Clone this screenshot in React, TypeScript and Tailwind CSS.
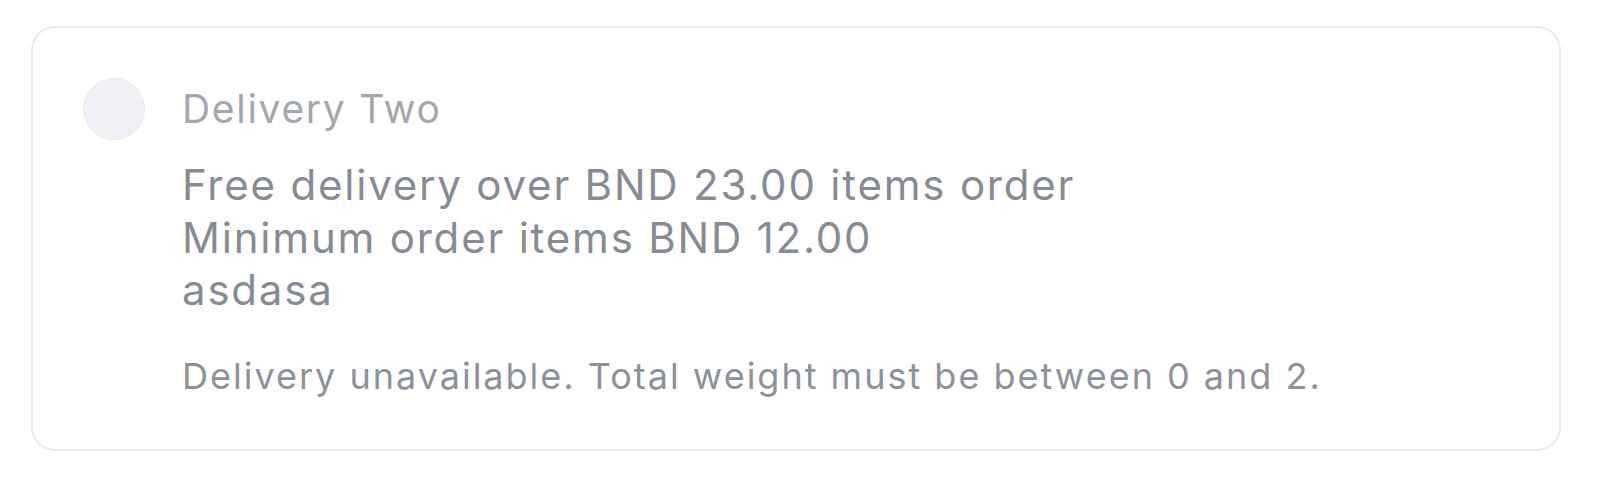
export default function App() {
  return (
    <div className="min-h-screen bg-white pt-[26px] pl-[31px]" style={{ fontFamily: "Inter, 'Noto Sans', sans-serif" }}>
      <div className="w-[1530px] rounded-[24px] border-2 border-[#e9eaf2] bg-white p-[50px]">
        <div className="flex gap-[37px]">
          <div className="flex h-[62px] shrink-0 items-center">
            <div className="h-[62px] w-[62px] rounded-full border border-[#eaebef] bg-[#f0f1f4]" />
          </div>
          <div className="flex flex-col">
            <div className="text-[39px] leading-[62px] tracking-[1.7px] text-[#a3a7af]">Delivery Two</div>
            <div className="mt-[19px] text-[42px] leading-[52.5px] tracking-[1.8px] text-[#868b94]">
              <div>Free delivery over BND 23.00 items order</div>
              <div>Minimum order items BND 12.00</div>
              <div>asdasa</div>
            </div>
            <div className="mt-[37px] text-[36px] leading-[45px] tracking-[2px] text-[#8d929a]">
              Delivery unavailable. Total weight must be between 0 and 2.
            </div>
          </div>
        </div>
      </div>
    </div>
  );
}
